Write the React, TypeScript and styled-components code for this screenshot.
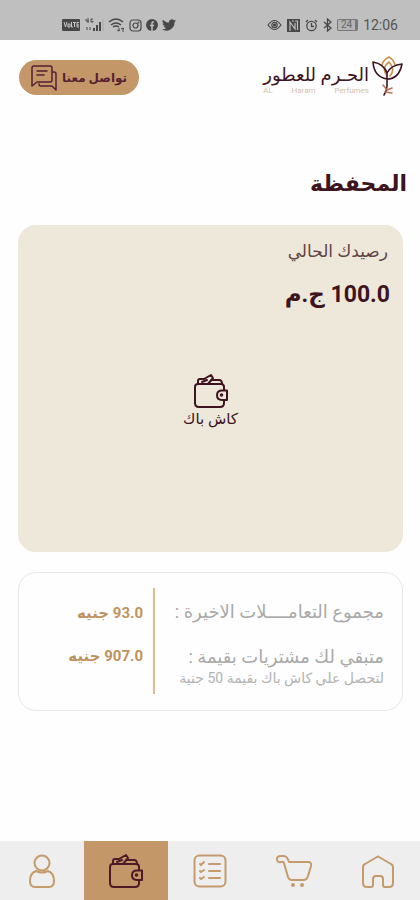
import React from "react";
import styled, { createGlobalStyle } from "styled-components";

const wine = "#3d1420";
const tan = "#c39768";
const arabic = `Roboto, "DejaVu Sans", sans-serif`;

const GlobalStyle = createGlobalStyle`
  * { box-sizing: border-box; }
  body { margin: 0; background: #fefefe; font-family: ${arabic}; color: ${wine}; }
  h1, p, dl, dt, dd { margin: 0; }
`;

const Screen = styled.div`
  display: flex;
  flex-direction: column;
  min-height: 100vh;
`;

const StatusBar = styled.div`
  direction: ltr;
  display: flex;
  justify-content: space-between;
  align-items: center;
  height: 40px;
  padding: 10px 22px 0 62px;
  background: #bfbfbf;
  color: #484848;
`;

const StatusGroup = styled.div<{ $gap: number }>`
  display: flex;
  align-items: center;
  gap: ${(p) => p.$gap}px;
  svg { display: block; }
`;

const Clock = styled.time`
  font: 14px/16px Roboto, sans-serif;
  color: #555;
`;

const Header = styled.header`
  direction: ltr;
  display: flex;
  justify-content: space-between;
  align-items: flex-start;
  padding: 15px 17px 0 19px;
`;

const ContactButton = styled.button`
  display: flex;
  align-items: center;
  gap: 4px;
  height: 35px;
  margin-top: 5px;
  padding: 0 12px 0 11px;
  border: 0;
  border-radius: 18px;
  background: ${tan};
  color: #571f32;
  font: bold 12px/20px ${arabic};
  svg { display: block; }
`;

const Brand = styled.a`
  display: flex;
  align-items: flex-start;
  gap: 2px;
  color: ${wine};
  text-decoration: none;
`;

const BrandText = styled.span`
  display: flex;
  flex-direction: column;
  padding-top: 8px;
`;

const BrandName = styled.span`
  direction: rtl;
  font: 18px/24px ${arabic};
  white-space: nowrap;
`;

const BrandLatin = styled.span`
  display: flex;
  justify-content: space-between;
  font: 8px/8px Roboto, sans-serif;
  color: #d3c0ac;
`;

const Main = styled.main`
  display: flex;
  flex-direction: column;
  flex: 1;
  padding: 71px 17px 20px 18px;
`;

const Title = styled.h1`
  font: bold 22px/32px ${arabic};
  margin-right: -4px;
`;

const WalletCard = styled.section`
  display: flex;
  flex-direction: column;
  min-height: 327px;
  margin-top: 25px;
  padding: 12px 13px;
  border-radius: 18px;
  background: #eee8da;
`;

const BalanceLabel = styled.p`
  font: 17px/28px ${arabic};
  color: #5e4444;
  padding-right: 2px;
`;

const Balance = styled.p`
  margin-top: 14px;
  font: bold 23px/32px ${arabic};
`;

const CashBack = styled.div`
  display: flex;
  flex-direction: column;
  align-items: center;
  margin-top: 62px;
  font: 15px/20px ${arabic};
  svg { display: block; }
`;

const Summary = styled.dl`
  display: grid;
  grid-template-columns: 1fr 136px;
  margin-top: 20px;
  padding: 15px 18px 16px 0;
  border: 1px solid #e6e6e6;
  border-radius: 18px;
`;

const SummaryCell = styled.div`
  display: contents;
`;

const Term = styled.dt`
  min-height: 50px;
  padding-top: 11px;
  font: 18px/26px ${arabic};
  color: #a9a9a9;
  white-space: nowrap;
`;

const SecondTerm = styled(Term)`
  padding-top: 6px;
  min-height: 56px;
`;

const Note = styled.small`
  display: block;
  font: 14px/16px ${arabic};
  color: #b3b3b3;
`;

const Amount = styled.dd<{ $top: number }>`
  padding: ${(p) => p.$top}px 10px 0 0;
  border-right: 2px solid #d9bd94;
  font: bold 15px/26px ${arabic};
  color: #be935f;
  white-space: nowrap;
`;

const Nav = styled.nav`
  display: grid;
  grid-template-columns: repeat(5, 1fr);
  height: 59px;
  background: #eeeeee;
`;

const NavLink = styled.a<{ $active?: boolean }>`
  display: flex;
  justify-content: center;
  align-items: center;
  background: ${(p) => (p.$active ? tan : "transparent")};
  color: ${(p) => (p.$active ? "#4e1a27" : "#c59a6c")};
  svg { display: block; }
`;

const WalletIcon = ({ size }: { size: number }) => (
  <svg width={size} height={size} viewBox="0 0 36 36" fill="none" stroke="currentColor" strokeWidth="2" strokeLinecap="round" strokeLinejoin="round">
    <path d="M31 17v-3q0-3-3-3H5q-3 0-3 3v16q0 4 4 4h21q4 0 4-4v-3" />
    <path d="M5 11V8q0-2 2-2h4l7-4 2 3-5 6M18 7h8q3 0 3 4M9 9l5-2" />
    <path d="M34 17.500h-5q-5 0-5 4.700t5 4.700h5z" />
    <circle cx="28.500" cy="22" r="0.800" />
  </svg>
);

const UserIcon = () => (
  <svg width="30" height="36" viewBox="0 0 30 36" fill="none" stroke="currentColor" strokeWidth="2">
    <circle cx="15" cy="10" r="7.500" />
    <path d="M9 18q-6 2-6 10 0 6 5 6h14q5 0 5-6 0-8-6-10-6 3-12 0Z" strokeLinejoin="round" />
  </svg>
);

const ListIcon = () => (
  <svg width="36" height="36" viewBox="0 0 36 36" fill="none" stroke="currentColor" strokeWidth="2" strokeLinecap="round">
    <rect x="2.500" y="2.500" width="31" height="31" rx="5" />
    <path d="M17 11h11M17 18h11M17 25h11M8 11l1 1 3-3M8 18l1 1 3-2M8 25l1 1 3-2" />
  </svg>
);

const CartIcon = () => (
  <svg width="38" height="36" viewBox="0 0 38 36" fill="none" stroke="currentColor" strokeWidth="2" strokeLinejoin="round">
    <path d="M14 9h19q4 0 3 4l-3 10q-1 4-5 4H17q-3 0-4-3L9 10Q8 8 6 9q-4 1-4-3 0-3 4-3h3q3 0 5 6Z" />
    <circle cx="18" cy="32" r="2" fill="currentColor" stroke="none" />
    <circle cx="27" cy="32" r="2" fill="currentColor" stroke="none" />
  </svg>
);

const HomeIcon = () => (
  <svg width="36" height="36" viewBox="0 0 36 36" fill="none" stroke="currentColor" strokeWidth="2" strokeLinejoin="round">
    <path d="M3 14q0-2 2-3l12-7q1-1 2 0l12 7q2 1 2 3v16q0 4-4 4h-4q-2 0-2-2v-6q0-3-3-3h-4q-3 0-3 3v6q0 2-2 2H7q-4 0-4-4Z" />
  </svg>
);

const ChatIcon = () => (
  <svg width="28" height="28" viewBox="0 0 28 28" fill="none" stroke="currentColor" strokeWidth="1.500" strokeLinejoin="round" strokeLinecap="round">
    <path d="M4 2h16q2 0 2 2v12q0 2-2 2H7l-5 4V4q0-2 2-2Z" />
    <path d="M7 7h10M7 11h7M22 8h2q2 0 2 2v16l-4-4H11q-2 0-2-2" />
  </svg>
);

const FlowerMark = () => (
  <svg width="32" height="42" viewBox="0 0 32 42" fill="none" strokeWidth="1.600" strokeLinecap="round" strokeLinejoin="round">
    <path d="M11 10q1-5 7-8 5 3 6 8M16 21q-6-8 2-14 7 7 1 14" stroke="#c99352" />
    <path d="M16 24Q3 22 2 7q11 2 14 11Q20 10 31 9q-3 15-15 15Zm0-6v13q0 5-3 9" stroke={wine} />
    <path d="M12 30l4 5 5-2M14 37l7 1" stroke="#bb765a" />
  </svg>
);

const VolteIcon = () => (
  <svg width="18" height="12" viewBox="0 0 18 12">
    <rect width="18" height="12" rx="1" fill="currentColor" />
    <path d="M2 3l1.500 5L5 3M6 5h2v3H6zM9.500 3v5H11M11 3.500h3M12.500 3.500V8M17 3.500h-2V8h2M15 6h2" fill="none" stroke="#c9c9c9" />
  </svg>
);

const SignalIcon = () => (
  <svg width="20" height="14" viewBox="0 0 20 14" fill="none" stroke="currentColor">
    <path d="M2 1v2h3M4 0v5M9 1H7v3h2V3M3 9v3M6 9v3" />
    <path d="M10 10v3M13 7v6M16 4v9" strokeWidth="2" />
    <path d="M19 1v12" stroke="#aaa" />
  </svg>
);

const WifiIcon = () => (
  <svg width="17" height="14" viewBox="0 0 17 14" fill="none" stroke="currentColor" strokeWidth="1.500">
    <path d="M1 4q7-6 14 0M3 7q5-4 10 0M5 9q3-2 6 0" />
    <path d="M11 13v-3M9 12l2 1 1-1M15 10v4M13 11l2-1 1 1" strokeWidth="1" />
  </svg>
);

const InstagramIcon = () => (
  <svg width="13" height="13" viewBox="0 0 13 13" fill="none" stroke="currentColor" strokeWidth="1.200">
    <rect x="1" y="1" width="11" height="11" rx="3" />
    <circle cx="6.500" cy="6.500" r="2.500" />
    <circle cx="9.500" cy="3.500" r="0.300" />
  </svg>
);

const FacebookIcon = () => (
  <svg width="12" height="12" viewBox="0 0 12 12">
    <circle cx="6" cy="6" r="6" fill="currentColor" />
    <path d="M8 3q-2-.5-2 1.500V12M4 6.500h4" stroke="#bfbfbf" strokeWidth="1.500" fill="none" />
  </svg>
);

const TwitterIcon = () => (
  <svg width="14" height="12" viewBox="0 0 24 20" fill="currentColor">
    <path d="M24 2.400a10 10 0 0 1-2.800.8A5 5 0 0 0 23.300.5a10 10 0 0 1-3.100 1.200A5 5 0 0 0 11.800 6 14 14 0 0 1 1.700 1a5 5 0 0 0 1.500 6.500A5 5 0 0 1 1 7a5 5 0 0 0 4 4.800 5 5 0 0 1-2.200.1 5 5 0 0 0 4.600 3.400A10 10 0 0 1 0 17.300 14 14 0 0 0 21.500 4.800 10 10 0 0 0 24 2.400Z" />
  </svg>
);

const EyeIcon = () => (
  <svg width="15" height="12" viewBox="0 0 15 12" fill="none" stroke="currentColor" strokeWidth="1.200">
    <path d="M1 6q6.500-9 13 0-6.500 9-13 0Z" />
    <circle cx="7.500" cy="6" r="2.700" />
    <circle cx="7.500" cy="6" r="1" fill="currentColor" />
  </svg>
);

const NfcIcon = () => (
  <svg width="13" height="13" viewBox="0 0 13 13">
    <path d="M0 0h13v13H0z" fill="currentColor" />
    <path d="M3 12V3l5 7V4M8 2h2.500v9M5 2h2" stroke="#bfbfbf" strokeWidth="1.200" fill="none" />
  </svg>
);

const AlarmIcon = () => (
  <svg width="13" height="13" viewBox="0 0 13 13" fill="none" stroke="currentColor" strokeWidth="1.300">
    <circle cx="6.500" cy="7" r="4.700" />
    <path d="M6.500 4v3.500H9M1 3l2-2M12 3l-2-2" />
  </svg>
);

const BluetoothIcon = () => (
  <svg width="9" height="14" viewBox="0 0 9 14" fill="none" stroke="currentColor" strokeWidth="1.300">
    <path d="M1 4l7 6-3.500 3V1L8 4l-7 6" />
  </svg>
);

const BatteryBox = styled.span`
  display: flex;
  align-items: center;
  justify-content: center;
  width: 21px;
  height: 12px;
  border: 1px solid #777;
  border-right-width: 3px;
  border-radius: 2px;
  background: #b4b4b4;
  color: #666;
  font: 10px/10px Roboto, sans-serif;
`;

export default function App() {
  return (
    <Screen dir="rtl" lang="ar">
      <GlobalStyle />
      <StatusBar>
        <StatusGroup $gap={4}>
          <VolteIcon />
          <SignalIcon />
          <WifiIcon />
          <InstagramIcon />
          <FacebookIcon />
          <TwitterIcon />
        </StatusGroup>
        <StatusGroup $gap={5}>
          <EyeIcon />
          <NfcIcon />
          <AlarmIcon />
          <BluetoothIcon />
          <BatteryBox>24</BatteryBox>
          <Clock>12:06</Clock>
        </StatusGroup>
      </StatusBar>
      <Header>
        <ContactButton type="button">
          <ChatIcon />
          <span dir="rtl">تواصل معنا</span>
        </ContactButton>
        <Brand href="#home">
          <BrandText>
            <BrandName>الحـرم للعطور</BrandName>
            <BrandLatin>
              <span>AL</span>
              <span>Haram</span>
              <span>Perfumes</span>
            </BrandLatin>
          </BrandText>
          <FlowerMark />
        </Brand>
      </Header>
      <Main>
        <Title>المحفظة</Title>
        <WalletCard>
          <BalanceLabel>رصيدك الحالي</BalanceLabel>
          <Balance>100.0 ج.م</Balance>
          <CashBack>
            <WalletIcon size={36} />
            <span>كاش باك</span>
          </CashBack>
        </WalletCard>
        <Summary>
          <SummaryCell>
            <Term>مجموع التعامــــلات الاخيرة :</Term>
            <Amount $top={12}>93.0 جنيه</Amount>
          </SummaryCell>
          <SummaryCell>
            <SecondTerm>
              متبقي لك مشتريات بقيمة :
              <Note>لتحصل علي كاش باك بقيمة 50 جنية</Note>
            </SecondTerm>
            <Amount $top={5}>907.0 جنيه</Amount>
          </SummaryCell>
        </Summary>
      </Main>
      <Nav>
        <NavLink href="#home" aria-label="الرئيسية"><HomeIcon /></NavLink>
        <NavLink href="#cart" aria-label="السلة"><CartIcon /></NavLink>
        <NavLink href="#orders" aria-label="الطلبات"><ListIcon /></NavLink>
        <NavLink href="#wallet" aria-label="المحفظة" aria-current="page" $active><WalletIcon size={36} /></NavLink>
        <NavLink href="#account" aria-label="الحساب"><UserIcon /></NavLink>
      </Nav>
    </Screen>
  );
}
